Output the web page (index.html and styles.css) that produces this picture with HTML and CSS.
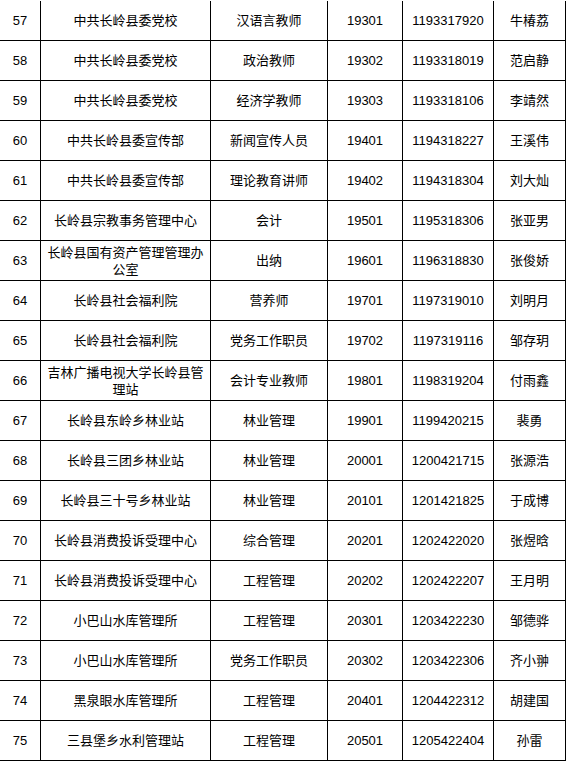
FILE: index.html
```html
<!DOCTYPE html>
<html lang="zh-CN">
<head>
<meta charset="utf-8">
<title>招聘人员名单</title>
<link rel="stylesheet" href="styles.css">
</head>
<body>
<div class="sheet">
  <div class="row"><div class="c no">57</div><div class="c unit">中共长岭县委党校</div><div class="c pos">汉语言教师</div><div class="c code">19301</div><div class="c id">1193317920</div><div class="c name">牛椿荔</div></div>
  <div class="row"><div class="c no">58</div><div class="c unit">中共长岭县委党校</div><div class="c pos">政治教师</div><div class="c code">19302</div><div class="c id">1193318019</div><div class="c name">范启静</div></div>
  <div class="row"><div class="c no">59</div><div class="c unit">中共长岭县委党校</div><div class="c pos">经济学教师</div><div class="c code">19303</div><div class="c id">1193318106</div><div class="c name">李靖然</div></div>
  <div class="row"><div class="c no">60</div><div class="c unit">中共长岭县委宣传部</div><div class="c pos">新闻宣传人员</div><div class="c code">19401</div><div class="c id">1194318227</div><div class="c name">王溪伟</div></div>
  <div class="row"><div class="c no">61</div><div class="c unit">中共长岭县委宣传部</div><div class="c pos">理论教育讲师</div><div class="c code">19402</div><div class="c id">1194318304</div><div class="c name">刘大灿</div></div>
  <div class="row"><div class="c no">62</div><div class="c unit">长岭县宗教事务管理中心</div><div class="c pos">会计</div><div class="c code">19501</div><div class="c id">1195318306</div><div class="c name">张亚男</div></div>
  <div class="row"><div class="c no">63</div><div class="c unit">长岭县国有资产管理管理办公室</div><div class="c pos">出纳</div><div class="c code">19601</div><div class="c id">1196318830</div><div class="c name">张俊娇</div></div>
  <div class="row"><div class="c no">64</div><div class="c unit">长岭县社会福利院</div><div class="c pos">营养师</div><div class="c code">19701</div><div class="c id">1197319010</div><div class="c name">刘明月</div></div>
  <div class="row"><div class="c no">65</div><div class="c unit">长岭县社会福利院</div><div class="c pos">党务工作职员</div><div class="c code">19702</div><div class="c id">1197319116</div><div class="c name">邹存玥</div></div>
  <div class="row"><div class="c no">66</div><div class="c unit">吉林广播电视大学长岭县管理站</div><div class="c pos">会计专业教师</div><div class="c code">19801</div><div class="c id">1198319204</div><div class="c name">付雨鑫</div></div>
  <div class="row"><div class="c no">67</div><div class="c unit">长岭县东岭乡林业站</div><div class="c pos">林业管理</div><div class="c code">19901</div><div class="c id">1199420215</div><div class="c name">裴勇</div></div>
  <div class="row"><div class="c no">68</div><div class="c unit">长岭县三团乡林业站</div><div class="c pos">林业管理</div><div class="c code">20001</div><div class="c id">1200421715</div><div class="c name">张源浩</div></div>
  <div class="row"><div class="c no">69</div><div class="c unit">长岭县三十号乡林业站</div><div class="c pos">林业管理</div><div class="c code">20101</div><div class="c id">1201421825</div><div class="c name">于成博</div></div>
  <div class="row"><div class="c no">70</div><div class="c unit">长岭县消费投诉受理中心</div><div class="c pos">综合管理</div><div class="c code">20201</div><div class="c id">1202422020</div><div class="c name">张煜晗</div></div>
  <div class="row"><div class="c no">71</div><div class="c unit">长岭县消费投诉受理中心</div><div class="c pos">工程管理</div><div class="c code">20202</div><div class="c id">1202422207</div><div class="c name">王月明</div></div>
  <div class="row"><div class="c no">72</div><div class="c unit">小巴山水库管理所</div><div class="c pos">工程管理</div><div class="c code">20301</div><div class="c id">1203422230</div><div class="c name">邹德骅</div></div>
  <div class="row"><div class="c no">73</div><div class="c unit">小巴山水库管理所</div><div class="c pos">党务工作职员</div><div class="c code">20302</div><div class="c id">1203422306</div><div class="c name">齐小翀</div></div>
  <div class="row"><div class="c no">74</div><div class="c unit">黑泉眼水库管理所</div><div class="c pos">工程管理</div><div class="c code">20401</div><div class="c id">1204422312</div><div class="c name">胡建国</div></div>
  <div class="row"><div class="c no">75</div><div class="c unit">三县堡乡水利管理站</div><div class="c pos">工程管理</div><div class="c code">20501</div><div class="c id">1205422404</div><div class="c name">孙雷</div></div>
</div>
</body>
</html>
```
FILE: styles.css
```css
html, body {
  margin: 0;
  padding: 0;
  background: #ffffff;
}

body {
  font-family: "Liberation Sans", "Noto Sans CJK SC", sans-serif;
  font-size: 13px;
  color: #000000;
}

.sheet {
  margin-top: 1px;
  width: 566px;
}

.row {
  display: grid;
  grid-template-columns: 41px 170px 117px 75px 91px 72px;
  height: 40px;
}

.c {
  box-sizing: border-box;
  border-right: 1px solid #000000;
  border-bottom: 1px solid #000000;
  display: flex;
  align-items: center;
  justify-content: center;
  text-align: center;
  line-height: 17px;
  padding: 0 4px;
  overflow: hidden;
}
```
